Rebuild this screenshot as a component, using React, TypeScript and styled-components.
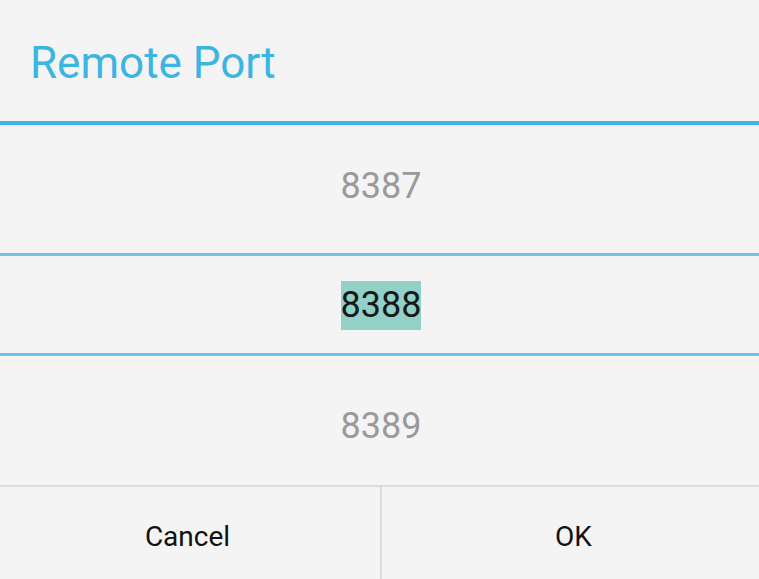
import React from "react";
import styled, { createGlobalStyle } from "styled-components";

const Global = createGlobalStyle`
  html, body { margin: 0; padding: 0; background: #f4f4f4; }
  body { font-family: Roboto, "Liberation Sans", sans-serif; }
`;

const Dialog = styled.div`
  width: 759px;
  height: 579px;
  display: flex;
  flex-direction: column;
  background: #f4f4f4;
  overflow: hidden;
`;

const Header = styled.div`
  height: 121px;
  display: flex;
  align-items: center;
  padding: 4px 0 0 30px;
  box-sizing: border-box;
  border-bottom: 4px solid #3cb5e2;
  box-sizing: content-box;
  height: 117px;
`;

const Title = styled.h1`
  margin: 0;
  font-family: Roboto, "Liberation Sans", sans-serif;
  font-weight: 400;
  font-size: 44px;
  line-height: 1;
  color: #3cb5e2;
`;

const Picker = styled.div`
  display: flex;
  flex-direction: column;
  height: 360px;
`;

const Row = styled.div<{ $h: number; $pt?: number; $pb?: number }>`
  height: ${(p) => p.$h}px;
  box-sizing: border-box;
  padding-top: ${(p) => p.$pt ?? 0}px;
  padding-bottom: ${(p) => p.$pb ?? 0}px;
  padding-left: 3px;
  display: flex;
  align-items: center;
  justify-content: center;
`;

const Divider = styled.div`
  height: 3px;
  background: #6cc5e7;
`;

const Value = styled.span<{ $selected?: boolean }>`
  display: inline-block;
  font-size: 36px;
  line-height: 49px;
  color: ${(p) => (p.$selected ? "#151a19" : "#9a9a9a")};
  background: ${(p) => (p.$selected ? "#93d0c8" : "transparent")};
`;

const Buttons = styled.div`
  flex: 1;
  display: grid;
  grid-template-columns: 380px 2px 1fr;
  border-top: 2px solid #dcdcdc;
`;

const VRule = styled.div`
  background: #dcdcdc;
`;

const Button = styled.button<{ $shift: number }>`
  border: 0;
  background: transparent;
  padding: 6px 0 0 0;
  margin: 0;
  font-family: Roboto, "Liberation Sans", sans-serif;
  font-size: 28px;
  color: #111;
  display: flex;
  align-items: center;
  justify-content: center;
  cursor: pointer;
  padding-left: ${(p) => (p.$shift > 0 ? p.$shift : 0)}px;
  padding-right: ${(p) => (p.$shift < 0 ? -p.$shift : 0)}px;
`;

export default function App() {
  return (
    <>
      <Global />
      <Dialog>
        <Header>
          <Title>Remote Port</Title>
        </Header>
        <Picker>
          <Row $h={128} $pb={5}>
            <Value>8387</Value>
          </Row>
          <Divider />
          <Row $h={97} $pt={2}>
            <Value $selected>8388</Value>
          </Row>
          <Divider />
          <Row $h={129} $pt={12}>
            <Value>8389</Value>
          </Row>
        </Picker>
        <Buttons>
          <Button $shift={-5}>Cancel</Button>
          <VRule />
          <Button $shift={6}>OK</Button>
        </Buttons>
      </Dialog>
    </>
  );
}
